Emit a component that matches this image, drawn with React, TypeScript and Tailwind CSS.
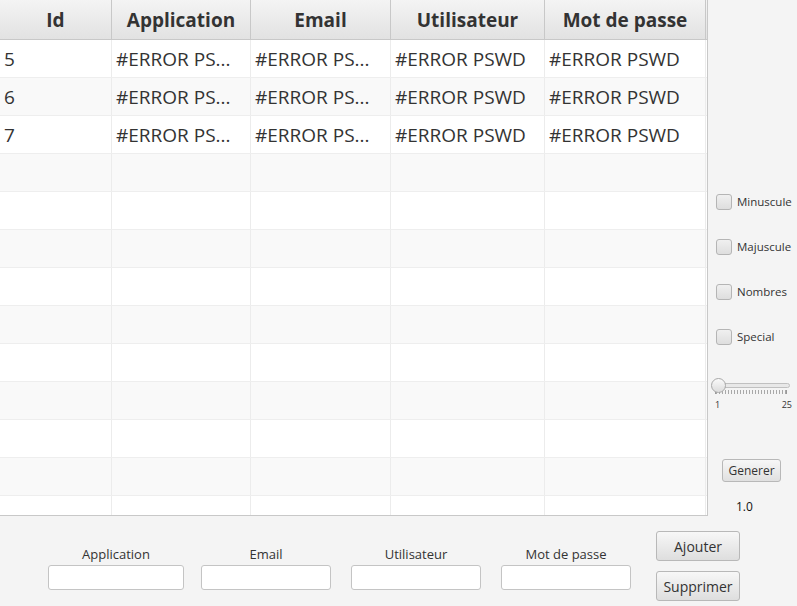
const columns = [
  { label: 'Id', w: 'w-[112px]' },
  { label: 'Application', w: 'w-[139px]' },
  { label: 'Email', w: 'w-[140px]' },
  { label: 'Utilisateur', w: 'w-[154px]' },
  { label: 'Mot de passe', w: 'w-[161px]' },
];

const rows = [
  ['5', '#ERROR PS...', '#ERROR PS...', '#ERROR PSWD', '#ERROR PSWD'],
  ['6', '#ERROR PS...', '#ERROR PS...', '#ERROR PSWD', '#ERROR PSWD'],
  ['7', '#ERROR PS...', '#ERROR PS...', '#ERROR PSWD', '#ERROR PSWD'],
];

const font = { fontFamily: '"Open Sans", "Noto Sans", sans-serif' };

export default function App() {
  const filled = [...rows, ...Array.from({ length: 10 }, () => ['', '', '', '', ''])];
  return (
    <div className="w-[797px] h-[606px] bg-[#f4f4f4] flex flex-col overflow-hidden text-[#333]" style={font}>
      <div className="flex h-[516px] shrink-0">
        <Table rows={filled} />
        <Options />
      </div>
      <Form />
    </div>
  );
}

function Table({ rows }: { rows: string[][] }) {
  return (
    <div className="w-[708px] shrink-0 h-[516px] border-r border-b border-[#c8c8c8] bg-white overflow-hidden flex flex-col">
      <div className="flex h-[40px] shrink-0 border-b border-[#c8c8c8] bg-gradient-to-b from-[#f4f4f4] to-[#e2e2e2]">
        {columns.map((c) => (
          <div
            key={c.label}
            className={`${c.w} shrink-0 border-r border-[#c8c8c8] flex items-center justify-center pt-[1px] text-[19px] font-bold text-[#333]`}
          >
            {c.label}
          </div>
        ))}
      </div>
      {rows.map((r, i) => (
        <div key={i} className={`flex h-[38px] shrink-0 border-b border-[#eeeeee] ${i % 2 === 1 ? 'bg-[#f9f9f9]' : 'bg-white'}`}>
          {r.map((cell, j) => (
            <div
              key={j}
              className={`${columns[j].w} shrink-0 border-r border-[#ececec] flex items-center px-[4px] pt-[1px] text-[19px] text-[#333] whitespace-nowrap overflow-hidden`}
            >
              {cell}
            </div>
          ))}
        </div>
      ))}
    </div>
  );
}

function Check({ label }: { label: string }) {
  return (
    <div className="flex items-center gap-[5px] h-[16px]">
      <div className="w-[16px] h-[16px] shrink-0 rounded-[3px] border border-[#b5b5b5] bg-gradient-to-b from-[#f0f0f0] to-[#dedede]" />
      <span className="text-[11.5px] text-[#333] whitespace-nowrap">{label}</span>
    </div>
  );
}

function Options() {
  return (
    <div className="flex-1 flex flex-col pt-[194px]">
      <div className="flex flex-col gap-[29px] pl-[8px]">
        <Check label="Minuscule" />
        <Check label="Majuscule" />
        <Check label="Nombres" />
        <Check label="Special" />
      </div>
      <div className="mt-[33px] relative w-[79px] h-[36px] ml-[3px]">
        <div className="absolute left-[2px] right-0 top-[5px] h-[5px] rounded-full border border-[#c0c0c0] bg-[#e8e8e8]" />
        <div className="absolute left-[4px] right-[3px] top-[12px] h-[4px] border-l border-r border-[#999] bg-[repeating-linear-gradient(90deg,#a8a8a8_0,#a8a8a8_1px,transparent_1px,transparent_3px)]" />
        <div className="absolute left-0 top-0 w-[15px] h-[15px] rounded-full border border-[#a8a8a8] bg-gradient-to-b from-[#fafafa] to-[#dcdcdc]" />
        <span className="absolute left-[4px] top-[20px] text-[9px] text-[#333]">1</span>
        <span className="absolute right-[-2px] top-[20px] text-[9px] text-[#333]">25</span>
      </div>
      <button className="mt-[50px] ml-[14px] w-[59px] h-[26px] rounded-[3px] border border-[#b8b8b8] bg-gradient-to-b from-[#f7f7f7] to-[#e0e0e0] text-[12px] text-[#333] flex items-center justify-center">
        Generer
      </button>
      <span className="mt-[16px] ml-[28px] text-[12px] text-[#111]">1.0</span>
    </div>
  );
}

function Field({ label, w, className }: { label: string; w: string; className?: string }) {
  return (
    <div className={`flex flex-col items-center gap-[2px] ${className ?? ''}`}>
      <span className="text-[13px] text-[#333] leading-[18px]">{label}</span>
      <div className={`${w} h-[25px] bg-white border border-[#c4c4c4] rounded-[3px]`} />
    </div>
  );
}

function Btn({ label }: { label: string }) {
  return (
    <button className="w-[84px] h-[30px] rounded-[3px] border border-[#b8b8b8] bg-gradient-to-b from-[#f7f7f7] to-[#dedede] text-[14px] text-[#333] flex items-center justify-center">
      {label}
    </button>
  );
}

function Form() {
  return (
    <div className="flex-1 flex items-start pt-[15px]">
      <div className="flex items-end pl-[48px] pt-[14px]">
        <Field label="Application" w="w-[136px]" />
        <Field label="Email" w="w-[130px]" className="ml-[17px]" />
        <Field label="Utilisateur" w="w-[130px]" className="ml-[20px]" />
        <Field label="Mot de passe" w="w-[130px]" className="ml-[20px]" />
      </div>
      <div className="ml-[25px] flex flex-col gap-[10px]">
        <Btn label="Ajouter" />
        <Btn label="Supprimer" />
      </div>
    </div>
  );
}
